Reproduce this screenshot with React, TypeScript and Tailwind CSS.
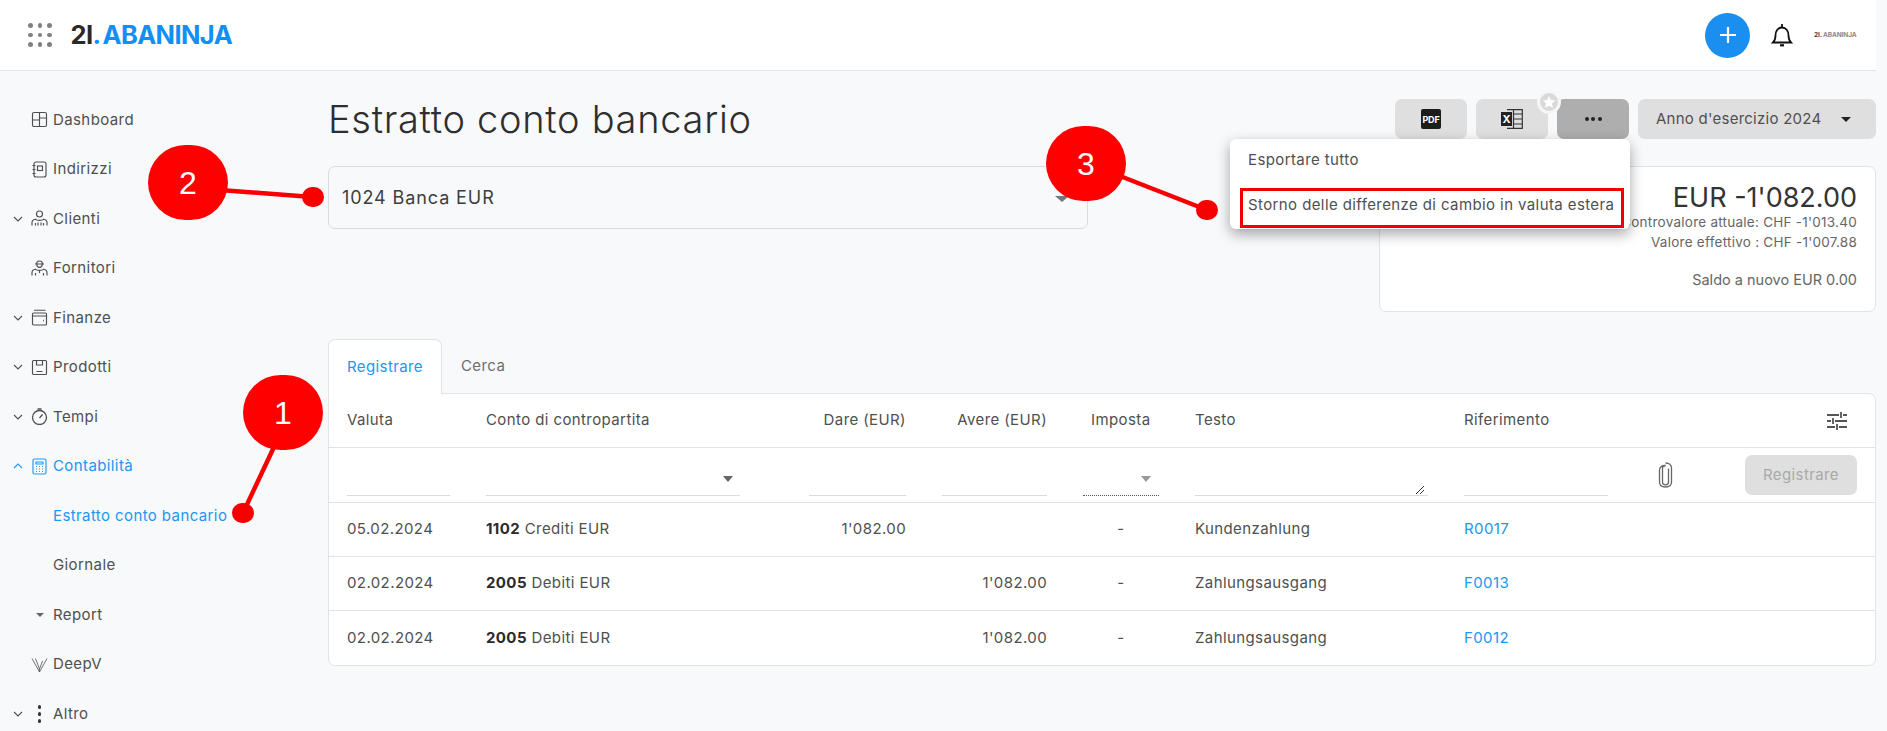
import React from "react";

const S = "fill-none stroke-current";

function Chev({ up = false }: { up?: boolean }) {
  return (
    <svg width="10" height="6" viewBox="0 0 10 6" className={S} strokeWidth="1.1">
      <path d={up ? "M1 5l4-4 4 4" : "M1 1l4 4 4-4"} />
    </svg>
  );
}

const icons: Record<string, React.ReactNode> = {
  dash: (
    <g>
      <rect x="1.5" y="1.500" width="14" height="14" rx="1.5" />
      <path d="M8.500 1.500v14M1.500 9h7M8.500 7h7" />
    </g>
  ),
  addr: (
    <g>
      <rect x="3" y="1" width="12" height="15" rx="2" />
      <rect x="6.500" y="5" width="5" height="4.500" />
      <path d="M1.500 4.500h3M1.500 8.500h3M1.500 12.500h3" />
    </g>
  ),
  client: (
    <g>
      <circle cx="8.500" cy="4" r="3" />
      <path d="M1 15.500v-3c0-2 1.500-3 3.500-3.300 1 1.600 7 1.600 8 0 2 .3 3.500 1.300 3.500 3.300v3M4.500 15.500v-2.500M12.500 15.500v-2.500M7 15.500v-3M10 15.500v-3" />
    </g>
  ),
  supplier: (
    <g>
      <path d="M5.500 4c0-4 6-4 6 0M4 4h9M5.800 4.500c0 3.800 5.400 3.800 5.400 0" />
      <path d="M1 15.500v-3c0-2 1.500-3 3.500-3.300 1 1.600 7 1.600 8 0 2 .3 3.500 1.300 3.500 3.300v3M4.500 15.500v-2.500M12.500 15.500v-2.500M8.500 10v3" />
    </g>
  ),
  finance: (
    <g>
      <rect x="1.500" y="4" width="14" height="12" rx="1" />
      <path d="M3 1.200h11.500M1.500 7h14" />
      <path d="M12 11.500h.8" strokeWidth="1.400" />
    </g>
  ),
  product: (
    <g>
      <rect x="1.500" y="1.500" width="14" height="14" rx="1" />
      <path d="M5.500 1.500v4.500h6V1.500M5.500 12.500h6" />
    </g>
  ),
  time: (
    <g strokeWidth="1.300">
      <circle cx="8.500" cy="9.500" r="7" />
      <path d="M6.500 1h4M8.500 10l3-3.500" />
    </g>
  ),
  calc: (
    <g>
      <rect x="2" y="1" width="13" height="15" rx="1.500" />
      <path d="M5 4h7v2H5zM5 8.500h1M8 8.500h1M11 8.500h1M5 11h1M8 11h1M11 11h1M5 13.500h1M8 13.500h1M11 13.500h1" />
    </g>
  ),
  deep: (
    <g strokeWidth="0.800">
      <path d="M1 2.500L8.500 16 16 2.500" />
      <path d="M4.500 2.500l4 10.500 3-8" />
      <path d="M8.500 13v3" />
    </g>
  ),
};

function NavIcon({ name }: { name: string }) {
  return (
    <svg width="17" height="17" viewBox="0 0 17 17" className={S} strokeWidth="1.150">
      {icons[name]}
    </svg>
  );
}

type NavItem = {
  label: string;
  icon?: string;
  chev?: "down" | "up";
  active?: boolean;
  caret?: boolean;
  dots?: boolean;
};

const nav: NavItem[] = [
  { label: "Dashboard", icon: "dash" },
  { label: "Indirizzi", icon: "addr" },
  { label: "Clienti", icon: "client", chev: "down" },
  { label: "Fornitori", icon: "supplier" },
  { label: "Finanze", icon: "finance", chev: "down" },
  { label: "Prodotti", icon: "product", chev: "down" },
  { label: "Tempi", icon: "time", chev: "down" },
  { label: "Contabilità", icon: "calc", chev: "up", active: true },
  { label: "Estratto conto bancario", active: true },
  { label: "Giornale" },
  { label: "Report", caret: true },
  { label: "DeepV", icon: "deep" },
  { label: "Altro", dots: true, chev: "down" },
];

function Sidebar() {
  return (
    <aside className="w-[328px] shrink-0 pt-[24px] text-[15px] tracking-[0.4px] text-[#4f4f4f]">
      {nav.map((n) => (
        <div
          key={n.label}
          className={`flex h-[49.5px] items-center ${n.active ? "text-[#2196f3]" : ""}`}
        >
          <span className="ml-[12px] flex w-[12px] justify-center">
            {n.chev && <Chev up={n.chev === "up"} />}
          </span>
          <span className="ml-[6px] flex w-[19px] justify-center">
            {n.icon && <NavIcon name={n.icon} />}
            {n.caret && (
              <span className="border-x-[4px] border-t-[4px] border-x-transparent border-t-[#666]" />
            )}
            {n.dots && (
              <span className="flex flex-col gap-[3.5px]">
                <span className="size-[3.5px] rounded-full bg-[#333]" />
                <span className="size-[3.5px] rounded-full bg-[#333]" />
                <span className="size-[3.5px] rounded-full bg-[#333]" />
              </span>
            )}
          </span>
          <span className="ml-[4px]">{n.label}</span>
        </div>
      ))}
    </aside>
  );
}

function Header() {
  return (
    <header className="flex h-[71px] w-[1876px] items-center border-b border-[#e2e3e6] bg-white">
      <div className="ml-[28px] grid grid-cols-3 gap-x-[5px] gap-y-[5px]">
        {Array.from({ length: 9 }).map((_, i) => (
          <span key={i} className="size-[4.5px] rounded-full bg-[#808080]" />
        ))}
      </div>
      <div className="ml-[19px] text-[25.5px] font-bold leading-none tracking-[-0.6px]">
        <span className="text-[#2a2a2a]">2I</span>
        <span className="text-[#118ff2]">.</span>
        <span className="ml-[2px] text-[#118ff2]">ABANINJA</span>
      </div>
      <div className="ml-auto flex items-center">
        <button className="flex size-[45px] items-center justify-center rounded-full bg-[#1b8ff0] text-white">
          <svg width="20" height="20" viewBox="0 0 20 20" className={S} strokeWidth="2.200">
            <path d="M10 2v16M2 10h16" />
          </svg>
        </button>
        <svg width="22" height="26" viewBox="0 0 22 26" className={`ml-[21px] ${S} text-[#111]`} strokeWidth="1.800">
          <path d="M2 20.500h18c-2-2-2.500-3.500-2.500-7 0-4.500-2.500-8-6.500-8s-6.500 3.500-6.500 8c0 3.500-.5 5-2.500 7z" />
          <path d="M11 2v3.200" />
          <path d="M9 23.300h4" strokeWidth="2.200" />
        </svg>
        <div className="ml-[21px] mr-[18px] w-[44px] whitespace-nowrap text-[6.5px] font-bold leading-none tracking-[-0.1px] text-[#8a8a8a]">
          <span className="text-[#444]">2I.</span> ABANINJA
        </div>
      </div>
    </header>
  );
}

function ToolButtons() {
  return (
    <div className="relative flex h-[40px] items-center text-[15px] text-[#4f4f4f]">
      <button className="flex h-[40px] w-[72px] items-center justify-center rounded-[7px] bg-[#dfdfdf]">
        <span className="flex h-[20px] w-[20px] items-center justify-center rounded-[2px] bg-[#1c1c1c] text-[9px] font-bold leading-none tracking-[-0.2px] text-white">
          PDF
        </span>
      </button>
      <button className="relative ml-[9px] flex h-[40px] w-[72px] items-center justify-center rounded-[7px] bg-[#dfdfdf]">
        <span className="relative flex h-[20px] w-[22px] items-center">
          <svg width="22" height="20" viewBox="0 0 22 20" className={`absolute left-0 top-0 ${S} text-[#333]`} strokeWidth="1.200">
            <path d="M6 .7h15.300v18.600H6M12.500 .7v18.600M12.500 5h8.800M12.500 10h8.800M12.500 15h8.800" />
          </svg>
          <span className="relative flex h-[14px] w-[11px] items-center justify-center bg-[#222] text-[11px] font-bold leading-none text-white">
            X
          </span>
        </span>
        <span className="absolute -right-[13px] -top-[9px] flex size-[24px] items-center justify-center rounded-full border-[3px] border-[#f6f6f6] bg-[#d9d9d9] text-white">
          <svg width="14" height="14" viewBox="0 0 24 24" className="fill-current">
            <path d="M12 1.500l3.200 6.900 7.500.9-5.500 5.200 1.400 7.500L12 18.400l-6.600 3.600 1.400-7.500L1.300 9.300l7.500-.9z" />
          </svg>
        </span>
      </button>
      <button className="ml-[9px] flex h-[40px] w-[72px] items-center justify-center gap-[2.500px] rounded-[7px] bg-[#aeaeae]">
        <span className="size-[4px] rounded-full bg-[#222]" />
        <span className="size-[4px] rounded-full bg-[#222]" />
        <span className="size-[4px] rounded-full bg-[#222]" />
      </button>
      <button className="ml-[9px] flex h-[40px] w-[238px] items-center rounded-[7px] bg-[#dfdfdf] pl-[18px]">
        <span className="whitespace-nowrap tracking-[0.25px]">Anno d'esercizio 2024</span>
        <span className="ml-[20px] border-x-[5px] border-t-[5px] border-x-transparent border-t-[#222]" />
      </button>
      <div className="absolute left-[-165px] top-[40px] z-20 h-[90px] w-[400px] rounded-[6px] bg-white tracking-[0.4px] shadow-[0_5px_14px_rgba(0,0,0,0.35)]">
        <div className="flex h-[49px] items-center pb-[7px] pl-[18px]">Esportare tutto</div>
        <div className="ml-[10px] flex h-[40px] w-[384px] items-center whitespace-nowrap border-[3px] border-[#f00000] pb-[5px] pl-[5px]">
          Storno delle differenze di cambio in valuta estera
        </div>
      </div>
    </div>
  );
}

const grid =
  "grid grid-cols-[139px_323px_133px_141px_112px_269px_176px_1fr] pl-[18px] items-center border-b border-[#e2e3e6]";

function Underline({ w, dotted = false, children }: { w: string; dotted?: boolean; children?: React.ReactNode }) {
  return (
    <div
      className={`relative mt-[8px] h-[34px] ${w} border-b ${dotted ? "border-dotted border-[#555]" : "border-[#d9dbdf]"}`}
    >
      {children}
    </div>
  );
}

const rows = [
  { date: "05.02.2024", code: "1102", acc: "Crediti EUR", dare: "1'082.00", avere: "", text: "Kundenzahlung", ref: "R0017" },
  { date: "02.02.2024", code: "2005", acc: "Debiti EUR", dare: "", avere: "1'082.00", text: "Zahlungsausgang", ref: "F0013" },
  { date: "02.02.2024", code: "2005", acc: "Debiti EUR", dare: "", avere: "1'082.00", text: "Zahlungsausgang", ref: "F0012" },
];

function Table() {
  return (
    <div className="rounded-b-[7px] rounded-tr-[7px] border border-[#e2e3e6] bg-white text-[15px] tracking-[0.4px] text-[#4f4f4f]">
      <div className={`${grid} h-[54px]`}>
        <div>Valuta</div>
        <div>Conto di contropartita</div>
        <div className="w-[97px] whitespace-nowrap text-right">Dare (EUR)</div>
        <div className="w-[105px] whitespace-nowrap text-right">Avere (EUR)</div>
        <div className="pl-[8px]">Imposta</div>
        <div>Testo</div>
        <div>Riferimento</div>
        <div className="flex justify-end pr-[27px]">
          <svg width="22" height="20" viewBox="0 0 22 20" className={`${S} text-[#555]`} strokeWidth="1.800">
            <path d="M1 4h12M17 4h4M15 1v6M1 10h4M9 10h12M7 7v6M1 16h8M13 16h8M11 13v6" />
          </svg>
        </div>
      </div>
      <div className={`${grid} h-[55px]`}>
        <Underline w="w-[103px]" />
        <Underline w="w-[254px]">
          <span className="absolute right-[7px] top-[14px] border-x-[5px] border-t-[6px] border-x-transparent border-t-[#666]" />
        </Underline>
        <Underline w="w-[97px]" />
        <Underline w="w-[105px]" />
        <Underline w="w-[76px]" dotted>
          <span className="absolute right-[8px] top-[14px] border-x-[5px] border-t-[6px] border-x-transparent border-t-[#999]" />
        </Underline>
        <Underline w="w-[233px]">
          <svg width="10" height="10" viewBox="0 0 10 10" className={`absolute bottom-0 right-[3px] ${S} text-[#333]`} strokeWidth="1">
            <path d="M1 9l8-8M5 9l4-4" />
          </svg>
        </Underline>
        <Underline w="w-[144px]" />
        <div className="flex items-center pr-[18px]">
          <svg width="15" height="26" viewBox="0 0 15 26" className={`ml-[18px] ${S} text-[#666]`} strokeWidth="1.300">
            <path d="M10.500 6.500v13.500c0 1.800-1.200 2.800-3 2.800s-3-1-3-2.800V6c0-1.500 1.200-2.500 3-2.500" />
            <path d="M7.500 3.500c-3.500 0-6 1.500-6 4.500v12c0 3.200 2.500 5 6 5s6-1.800 6-5V6c0-3-2.500-5-6-5" />
          </svg>
          <button className="ml-auto flex h-[40px] w-[112px] items-center justify-center rounded-[7px] bg-[#dfdfdf] text-[#a8a8a8]">
            Registrare
          </button>
        </div>
      </div>
      {rows.map((r, i) => (
        <div key={i} className={`${grid} h-[54px] ${i === 2 ? "border-b-0" : ""}`}>
          <div>{r.date}</div>
          <div>
            <b className="font-bold text-[#2a2a2a]">{r.code}</b> {r.acc}
          </div>
          <div className="w-[97px] text-right">{r.dare}</div>
          <div className="w-[105px] text-right">{r.avere}</div>
          <div className="w-[76px] text-center">-</div>
          <div>{r.text}</div>
          <div className="text-[#2196f3]">{r.ref}</div>
          <div />
        </div>
      ))}
    </div>
  );
}

function Main() {
  return (
    <main className="w-[1548px]">
      <div className="flex h-[68px] items-start justify-between pt-[28px]">
        <h1 className="text-[38px] font-light leading-[40px] tracking-[0.7px] text-[#2e2e2e]">
          Estratto conto bancario
        </h1>
        <ToolButtons />
      </div>
      <div className="mt-[27px] flex items-start justify-between">
        <div className="relative flex h-[63px] w-[760px] items-center rounded-[7px] border border-[#d9dbdf] pl-[13px] text-[18px] tracking-[0.9px] text-[#3e3e3e]">
          1024 Banca EUR
          <span className="absolute right-[18px] top-[29px] border-x-[7px] border-t-[6px] border-x-transparent border-t-[#777]" />
        </div>
        <div className="flex h-[146px] w-[497px] flex-col items-end rounded-[7px] border border-[#e2e3e6] bg-white pr-[18px] pt-[14px] text-[#666]">
          <div className="-mb-[3px] text-[27px] leading-[34px] text-[#333]">EUR -1'082.00</div>
          <div className="text-[13.500px] leading-[20px] tracking-[0.25px]">Controvalore attuale: CHF -1'013.40</div>
          <div className="text-[13.500px] leading-[20px] tracking-[0.25px]">Valore effettivo : CHF -1'007.88</div>
          <div className="mt-[18px] text-[14.500px] leading-[20px]">Saldo a nuovo EUR 0.00</div>
        </div>
      </div>
      <div className="mt-[27px]">
        <div className="flex h-[54px] items-center text-[15px] tracking-[0.4px]">
          <div className="relative z-10 -mb-px flex h-[55px] w-[114px] items-center justify-center rounded-t-[7px] border border-b-0 border-[#e2e3e6] bg-white text-[#2196f3]">
            Registrare
          </div>
          <div className="ml-[19px] text-[#6e6e6e]">Cerca</div>
        </div>
        <Table />
      </div>
    </main>
  );
}

function Marker({ n, left, top, line }: { n: number; left: string; top: string; line: string }) {
  return (
    <>
      <svg width="1887" height="731" className="pointer-events-none absolute left-0 top-0 z-30">
        <path d={line} stroke="#f60000" strokeWidth="4.500" fill="none" />
      </svg>
      <div className={`absolute z-30 flex h-[75px] w-[80px] items-center justify-center rounded-full bg-[#fe0000] font-['Liberation_Sans',sans-serif] text-[32px] text-white ${left} ${top}`}>
        {n}
      </div>
    </>
  );
}

function Dot({ pos }: { pos: string }) {
  return <div className={`absolute z-30 h-[20px] w-[22px] rounded-full bg-[#f60000] ${pos}`} />;
}

export default function App() {
  return (
    <div className="relative h-[731px] w-[1887px] overflow-hidden bg-[#f8f9fb] font-['Inter',sans-serif]">
      <Header />
      <div className="flex">
        <Sidebar />
        <Main />
      </div>
      <Marker n={1} left="left-[243px]" top="top-[375px]" line="M274 447L243 513" />
      <Dot pos="left-[232px] top-[503px]" />
      <Marker n={2} left="left-[148px]" top="top-[145px]" line="M220 190L312 197" />
      <Dot pos="left-[302px] top-[187px]" />
      <Marker n={3} left="left-[1046px]" top="top-[126px]" line="M1120 176L1207 210" />
      <Dot pos="left-[1196px] top-[200px]" />
    </div>
  );
}
